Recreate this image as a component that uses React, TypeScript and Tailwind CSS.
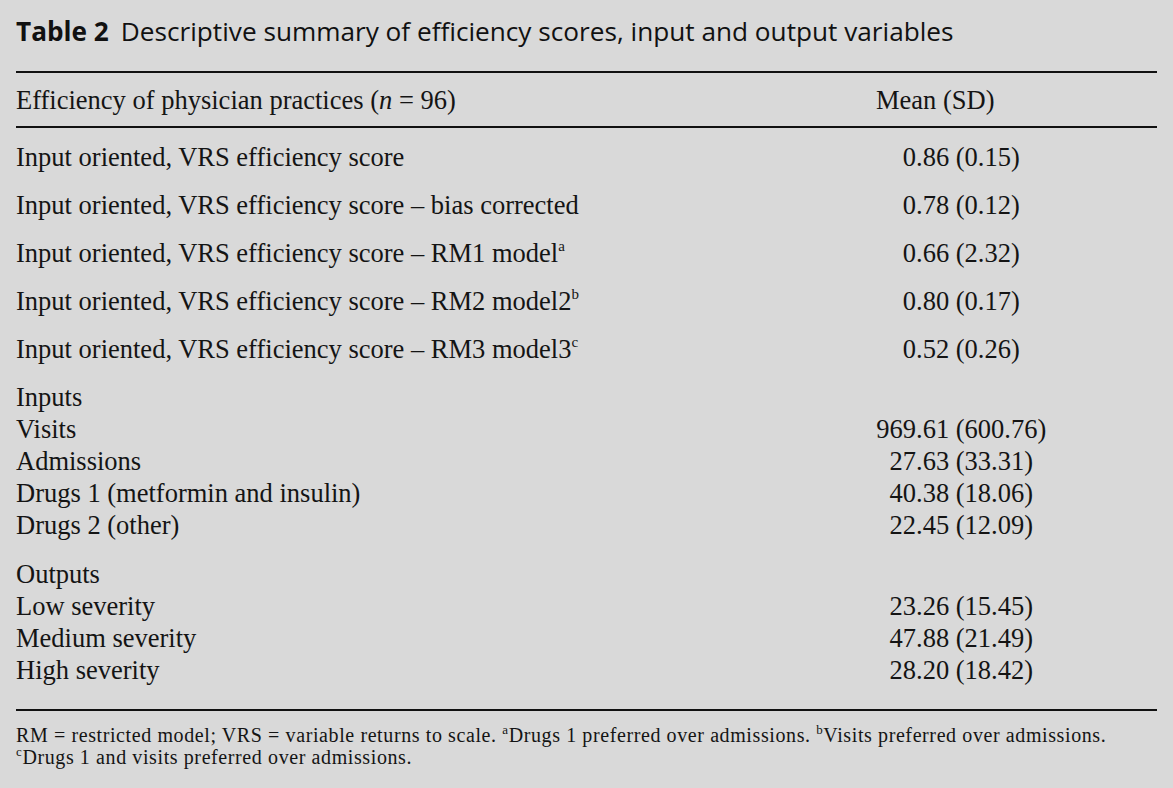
const serif = "font-['Liberation_Serif','Times_New_Roman',serif]";

type Row = { label: string; sup?: string; value?: string };

const scoreRows: Row[] = [
  { label: "Input oriented, VRS efficiency score", value: "0.86 (0.15)" },
  { label: "Input oriented, VRS efficiency score – bias corrected", value: "0.78 (0.12)" },
  { label: "Input oriented, VRS efficiency score – RM1 model", sup: "a", value: "0.66 (2.32)" },
  { label: "Input oriented, VRS efficiency score – RM2 model2", sup: "b", value: "0.80 (0.17)" },
  { label: "Input oriented, VRS efficiency score – RM3 model3", sup: "c", value: "0.52 (0.26)" },
];

const inputRows: Row[] = [
  { label: "Inputs" },
  { label: "Visits", value: "969.61 (600.76)" },
  { label: "Admissions", value: "27.63 (33.31)" },
  { label: "Drugs 1 (metformin and insulin)", value: "40.38 (18.06)" },
  { label: "Drugs 2 (other)", value: "22.45 (12.09)" },
];

const outputRows: Row[] = [
  { label: "Outputs" },
  { label: "Low severity", value: "23.26 (15.45)" },
  { label: "Medium severity", value: "47.88 (21.49)" },
  { label: "High severity", value: "28.20 (18.42)" },
];

// values line up on the first decimal point
function Value({ value }: { value?: string }) {
  if (!value) return null;
  const dot = value.indexOf(".");
  return (
    <>
      <span className="inline-block w-[40px] text-right">{value.slice(0, dot)}</span>
      {value.slice(dot)}
    </>
  );
}

function TableRow({ row, tall }: { row: Row; tall?: boolean }) {
  return (
    <div className={`flex items-center ${tall ? "h-[48px]" : "h-[32px]"}`}>
      <div className="flex-1 whitespace-nowrap">
        {row.label}
        {row.sup && <sup className="text-[15px] -top-[0.75em]">{row.sup}</sup>}
      </div>
      <div className="w-[281px] whitespace-nowrap">
        <Value value={row.value} />
      </div>
    </div>
  );
}

export default function App() {
  return (
    <div className="w-full h-[788px] bg-[#d9d9d9] px-4 pt-[16px] text-[#141414] overflow-hidden">
      <h1 className="font-['Open_Sans','Noto_Sans',sans-serif] text-[26.2px] leading-[30px] text-[#111] whitespace-nowrap">
        <span className="font-bold">Table 2</span>
        <span className="ml-[12px]">Descriptive summary of efficiency scores, input and output variables</span>
      </h1>

      <div className="mt-[25px] h-[2px] bg-[#111]" />

      <div className={`${serif} text-[26.5px] leading-[30px]`}>
        <div className="flex items-center h-[53px]">
          <div className="flex-1 whitespace-nowrap">
            Efficiency of physician practices (<i>n</i> = 96)
          </div>
          <div className="w-[281px] whitespace-nowrap">Mean (SD)</div>
        </div>
        <div className="h-[2px] bg-[#111]" />

        <div className="pt-[5px]">
          {scoreRows.map((r) => (
            <TableRow key={r.label} row={r} tall />
          ))}
        </div>
        <div className="mt-[8px]">
          {inputRows.map((r) => (
            <TableRow key={r.label} row={r} />
          ))}
        </div>
        <div className="mt-[17px]">
          {outputRows.map((r) => (
            <TableRow key={r.label} row={r} />
          ))}
        </div>
      </div>

      <div className="mt-[23px] h-[2px] bg-[#111]" />

      <p className={`${serif} mt-[13px] text-[20px] tracking-[0.6px] leading-[22px] whitespace-nowrap`}>
        RM = restricted model; VRS = variable returns to scale.{" "}
        <sup className="text-[13px] -top-[0.6em]">a</sup>Drugs 1 preferred over admissions.{" "}
        <sup className="text-[13px] -top-[0.6em]">b</sup>Visits preferred over admissions.
        <br />
        <sup className="text-[13px] -top-[0.6em]">c</sup>Drugs 1 and visits preferred over admissions.
      </p>
    </div>
  );
}
